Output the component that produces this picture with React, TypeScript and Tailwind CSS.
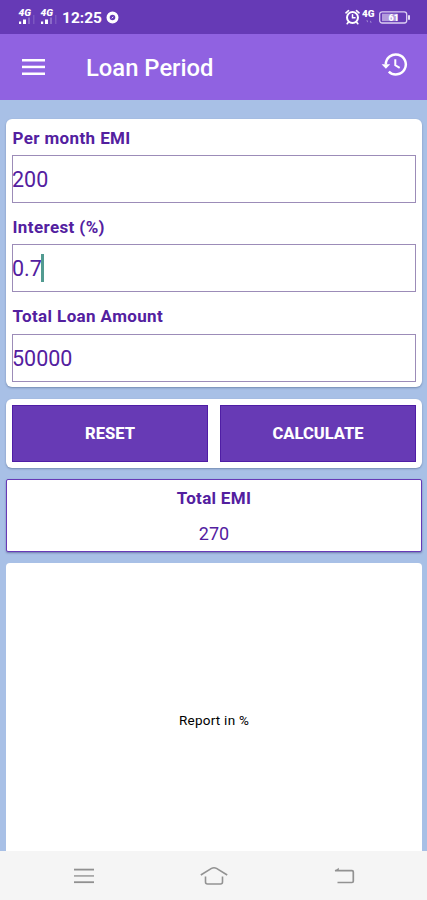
import React from 'react';

const fields = [
  { id: 'emi', label: 'Per month EMI', value: '200', focused: false },
  { id: 'interest', label: 'Interest (%)', value: '0.7', focused: true },
  { id: 'amount', label: 'Total Loan Amount', value: '50000', focused: false },
];

function Signal() {
  return (
    <svg width="19" height="16" viewBox="0 0 19 16" fill="#fff">
      <text x="0.5" y="7.3" fontSize="9" fontWeight="900" fontStyle="italic" textLength="12.5" lengthAdjust="spacingAndGlyphs">
        4G
      </text>
      <rect x="1" y="12.5" width="2.2" height="2.5" />
      <rect x="5" y="10.5" width="3" height="4.5" />
      <rect x="10" y="8.5" width="2" height="6.5" opacity="0.25" />
      <rect x="15" y="6" width="1.5" height="9" opacity="0.15" />
    </svg>
  );
}

function StatusBar() {
  return (
    <div className="flex h-[34px] shrink-0 items-center justify-between bg-[#663ab6] pl-[18px] pr-[17px] text-white">
      <div className="flex items-center">
        <Signal />
        <span className="ml-[3px] flex">
          <Signal />
        </span>
        <span className="ml-[3px] mt-[2px] w-[40px] whitespace-nowrap text-[15.5px] font-bold leading-[20px]">12:25</span>
        <svg className="ml-[4px]" width="13" height="13" viewBox="0 0 13 13" fill="none" stroke="#fff">
          <circle cx="6.5" cy="6.5" r="4.4" strokeWidth="3.2" />
          <path d="M5.8 7.3 7.2 5.8" strokeWidth="0.9" />
        </svg>
      </div>
      <div className="flex items-center">
        <svg width="15" height="16" viewBox="0 0 15 16" fill="none" stroke="#fff" strokeLinecap="round">
          <circle cx="7.5" cy="8.5" r="5.5" strokeWidth="2" />
          <path d="M7.5 5.8v3h2.5" strokeWidth="1.5" />
          <path d="M1 3.8 3.5 1.7M14 3.8l-2.5-2.1M3.3 13.3 2.2 14.7M11.7 13.3l1.1 1.4" strokeWidth="1.7" />
        </svg>
        <svg className="ml-[2px]" width="13" height="16" viewBox="0 0 13 16" fill="#fff">
          <text x="0" y="8.2" fontSize="9.5" fontWeight="900" textLength="12.5" lengthAdjust="spacingAndGlyphs">
            4G
          </text>
          <path d="M4 11.5h2v2zM8 11.5v2h2z" opacity="0.4" />
        </svg>
        <svg className="ml-[4px]" width="31" height="13" viewBox="0 0 31 13">
          <rect x="0.7" y="0.8" width="27" height="11.2" rx="2.5" fill="none" stroke="#ddd0f3" strokeWidth="1.3" />
          <rect x="3" y="2.7" width="15.5" height="7.4" fill="#b39bdc" />
          <rect x="29" y="4" width="2" height="5" rx="1" fill="#e4d9f6" />
          <text x="9.5" y="9.7" fontSize="9" fontWeight="900" fill="#fff">
            61
          </text>
        </svg>
      </div>
    </div>
  );
}

function AppBar() {
  return (
    <div className="flex h-[66px] shrink-0 items-center bg-[#9062e1] pl-[22px] pr-[19px] text-white">
      <svg width="23" height="18" viewBox="0 0 23 18" fill="#fff">
        <rect y="1" width="23" height="2.5" />
        <rect y="7.7" width="23" height="2.5" />
        <rect y="14.5" width="23" height="2.5" />
      </svg>
      <h1 className="ml-[41px] mt-[2px] whitespace-nowrap text-[23.8px] font-medium leading-[28px]">Loan Period</h1>
      <svg className="ml-auto mb-[5px]" width="27" height="25" viewBox="0 0 27 25" fill="none" stroke="#fff" strokeWidth="2.5">
        <path d="M4.8 12.5a10 10 0 1 1 3 7.1" />
        <path d="M14.3 7.3v6l4.4 2.6" strokeWidth="2" />
        <path d="M0.6 12.3h8.6L4.9 16.8z" fill="#fff" stroke="none" />
      </svg>
    </div>
  );
}

function NavBar() {
  return (
    <div className="flex h-[49px] shrink-0 items-center justify-between bg-[#f5f5f5] pl-[74px] pr-[72px]">
      <svg width="20" height="18" viewBox="0 0 20 18" fill="#909090">
        <rect y="1.7" width="20" height="1.8" />
        <rect y="8" width="20" height="1.8" opacity="0.75" />
        <rect y="14.3" width="20" height="1.8" />
      </svg>
      <svg width="28" height="20" viewBox="0 0 28 20" fill="none" stroke="#929292" strokeWidth="1.6">
        <path d="M0.8 9 11.5 2.4Q14 1 16.5 2.4L27.2 9" />
        <path d="M5.5 10.5V16Q5.5 18 7.5 18H20.5Q22.5 18 22.5 16V10.5" />
      </svg>
      <svg width="21" height="18" viewBox="0 0 21 18" fill="none" stroke="#929292" strokeWidth="1.7">
        <path d="M1 3.7H18Q19.3 3.7 19.3 5V14.2Q19.3 15.5 18 15.5H3.5" />
        <path d="M0.5 4 4.8 0.7V4z" fill="#929292" stroke="none" />
      </svg>
    </div>
  );
}

export default function App() {
  return (
    <div className="flex h-[900px] w-full flex-col overflow-hidden bg-[#a8c0e6] font-['Roboto',sans-serif] text-[#53209f]">
      <StatusBar />
      <AppBar />

      <div className="flex min-h-0 flex-1 flex-col pl-[6px] pr-[5px] pt-[19px]">
        <div className="h-[268px] shrink-0 rounded-md bg-white px-[6px] shadow-[0_1px_2px_rgba(50,70,110,0.45)]">
          {fields.map((f) => (
            <div key={f.id} className="h-[89.3px]">
              <label className="block h-[36px] pl-[0.5px] pt-[7.5px] text-[17px] font-bold leading-[22px] tracking-[0.38px]">{f.label}</label>
              <div className="flex h-[48px] items-center border border-[#9c8cb8] pt-[2px] text-[21.5px] leading-[26px]">
                <span className="-ml-px">{f.value}</span>
                {f.focused && <span className="-ml-px -mt-[2px] h-[28px] w-[3px] bg-[#529b91]"></span>}
              </div>
            </div>
          ))}
        </div>

        <div className="mt-[12px] flex h-[69px] shrink-0 gap-[12px] rounded-md bg-white px-[6px] pb-[6px] pt-[6px] shadow-[0_1px_2px_rgba(50,70,110,0.45)]">
          <button className="flex-1 border border-[#4f1da5] bg-[#673ab5] pt-[2px] text-[16.5px] font-extrabold text-white">RESET</button>
          <button className="flex-1 border border-[#4f1da5] bg-[#673ab5] pt-[2px] text-[16.5px] font-extrabold text-white">CALCULATE</button>
        </div>

        <div className="mt-[11px] h-[73px] shrink-0 rounded-xs border border-[#673ab7] bg-white text-center shadow-[0_1px_2px_rgba(50,50,110,0.5)]">
          <p className="pt-[7px] text-[17px] font-bold leading-[22px] tracking-[0.3px]">Total EMI</p>
          <p className="mt-[14px] text-[18px] leading-[22px]">270</p>
        </div>

        <div className="mt-[11px] flex-1 rounded-t-sm bg-white pt-[148px] text-center text-[13.5px] leading-[18px] tracking-[0.25px] text-black">
          Report in %
        </div>
      </div>

      <NavBar />
    </div>
  );
}
